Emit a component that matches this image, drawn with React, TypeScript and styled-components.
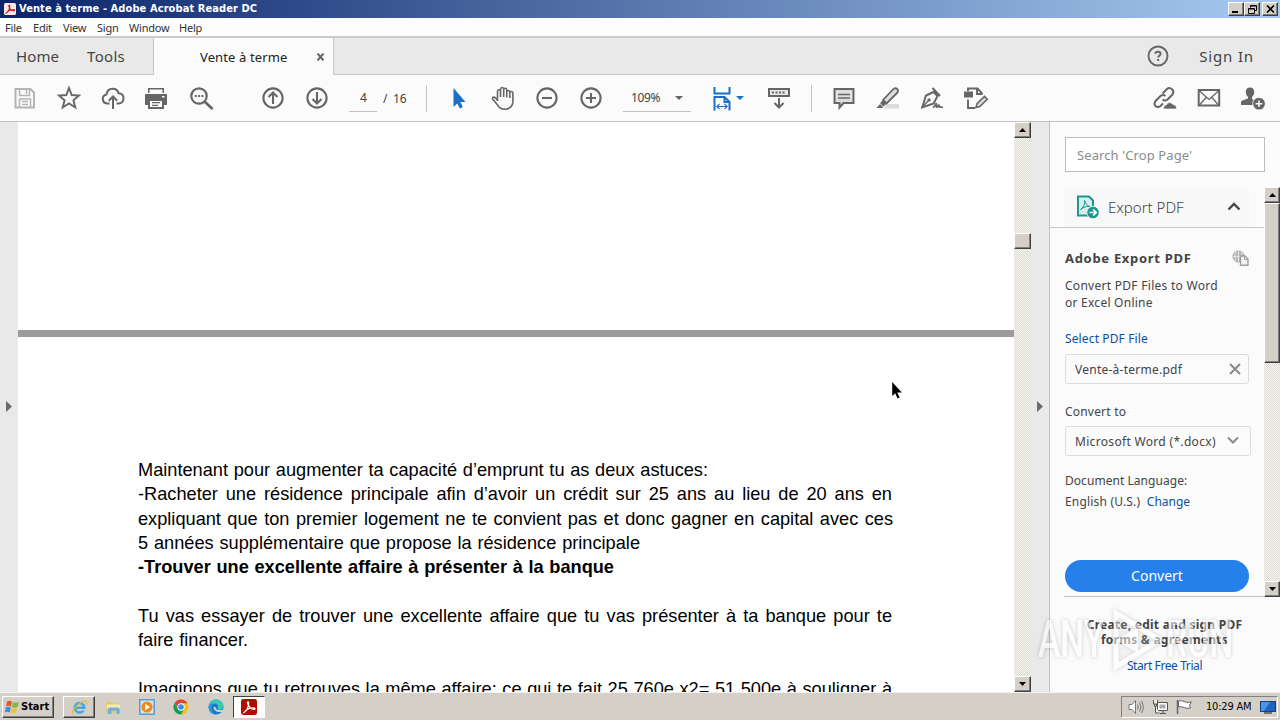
import React from "react";
import styled, { createGlobalStyle, css } from "styled-components";

const Global = createGlobalStyle`
  * { box-sizing: border-box; }
  html, body { margin: 0; padding: 0; }
  body { width: 1280px; height: 720px; overflow: hidden; font-family: "Noto Sans", sans-serif; color: #444; }
  svg { display: block; flex: none; }
`;

const Screen = styled.div`
  position: relative;
  display: flex;
  flex-direction: column;
  width: 1280px;
  height: 720px;
  overflow: hidden;
  background: #fbfbfb;
`;

type TextProps = { $size: number; $track?: number; $color?: string; $bold?: boolean; $light?: boolean };
const Text = styled.span<TextProps>`
  font-size: ${(p) => p.$size}px;
  letter-spacing: ${(p) => p.$track ?? 0}px;
  color: ${(p) => p.$color ?? "#444"};
  font-weight: ${(p) => (p.$bold ? 700 : p.$light ? 300 : 400)};
  white-space: nowrap;
`;

/* ---------- window chrome ---------- */

const TitleBar = styled.header`
  display: flex;
  align-items: center;
  height: 18px;
  flex: none;
  padding: 0 2px 0 4px;
  background: linear-gradient(90deg, #0a246a 0%, #a6caf0 100%);
`;
const TitleText = styled.span`
  flex: 1;
  margin-left: 3px;
  font: 700 11px/18px "DejaVu Sans Condensed", "DejaVu Sans", sans-serif;
  letter-spacing: 0.09px;
  color: #fff;
`;
const raised = css`
  background: #d4d0c8;
  border: 1px solid;
  border-color: #fff #404040 #404040 #fff;
  box-shadow: inset -1px -1px 0 #808080;
`;
const WindowButton = styled.button<{ $gap?: number }>`
  ${raised}
  display: flex;
  align-items: center;
  justify-content: center;
  width: 16px;
  height: 14px;
  padding: 0;
  margin-left: ${(p) => p.$gap ?? 0}px;
`;
const MenuBar = styled.nav`
  display: flex;
  height: 20px;
  flex: none;
  padding: 0 0 0 5px;
  border-bottom: 2px solid #cbcbcb;
  background: #fdfdfd;
  line-height: 20px;
`;
const MenuItem = styled.span<{ $w: number }>`
  width: ${(p) => p.$w}px;
  font-size: 11px;
  letter-spacing: -0.2px;
  color: #333;
`;
const TabBar = styled.div`
  display: flex;
  height: 37px;
  flex: none;
  background: #e9e9e9;
`;
const TabGroup = styled.div`
  display: flex;
  align-items: center;
  gap: 28px;
  width: 154px;
  padding-left: 16px;
  border-right: 1px solid #c6c6c6;
  border-bottom: 1px solid #c6c6c6;
`;
const ActiveTab = styled.div`
  display: flex;
  align-items: center;
  width: 179px;
  padding: 1px 7px 0 46px;
  background: #fbfbfb;
  justify-content: space-between;
`;
const TabSpace = styled.div`
  flex: 1;
  display: flex;
  align-items: center;
  justify-content: flex-end;
  gap: 30px;
  padding-right: 26px;
  border-left: 1px solid #c6c6c6;
  border-bottom: 1px solid #c6c6c6;
`;

/* ---------- toolbar ---------- */

const Toolbar = styled.div`
  display: flex;
  align-items: center;
  height: 47px;
  flex: none;
  padding: 0 5px 0 3px;
  border-bottom: 1px solid #c2c2c2;
  background: #fbfbfb;
`;
const ToolButton = styled.div`
  display: flex;
  align-items: center;
  justify-content: center;
  width: 44px;
  height: 46px;
`;
const Divider = styled.div`
  width: 1px;
  height: 27px;
  background: #c4c4c4;
`;
const Spacer = styled.div<{ $w?: number }>`
  ${(p) => (p.$w ? `width: ${p.$w}px; flex: none;` : "flex: 1;")}
`;
const Field = styled.div<{ $w: number; $pad?: number }>`
  display: flex;
  align-items: center;
  justify-content: space-between;
  width: ${(p) => p.$w}px;
  height: 28px;
  padding: 0 8px 0 ${(p) => p.$pad ?? 8}px;
  border-bottom: 1px solid #c0c0c0;
`;
const FitButton = styled.div`
  display: flex;
  align-items: center;
  gap: 4px;
  width: 45px;
`;

/* ---------- body ---------- */

const Body = styled.div`
  display: flex;
  flex: none;
  height: 570px;
`;
const Gutter = styled.div<{ $w: number }>`
  display: flex;
  align-items: center;
  width: ${(p) => p.$w}px;
  padding: 0 0 2px 5px;
  background: #e9e9e9;
`;
const Pages = styled.main`
  width: 996px;
  overflow: hidden;
  background: #fff;
`;
const PageGap = styled.div`
  height: 7px;
  margin-top: 208px;
  background: #9a9a9a;
`;
const PageText = styled.div`
  padding: 121px 0 0 120px;
`;
const Line = styled.div<{ $w: number; $bold?: boolean }>`
  width: ${(p) => p.$w}px;
  height: 24.3px;
  font: ${(p) => (p.$bold ? 700 : 400)} 18.2px/24.3px "Liberation Sans", Arial, sans-serif;
  color: #000;
  white-space: nowrap;
  text-align-last: justify;
`;
const Scrollbar = styled.div<{ $w: number; $h: number }>`
  display: flex;
  flex-direction: column;
  width: ${(p) => p.$w}px;
  height: ${(p) => p.$h}px;
  flex: none;
  background: repeating-conic-gradient(#dcd9d2 0 25%, #f8f7f4 0 50%) 0 0 / 2px 2px;
`;
const ScrollPiece = styled.div<{ $h: number }>`
  ${raised}
  display: flex;
  align-items: center;
  justify-content: center;
  height: ${(p) => p.$h}px;
  flex: none;
`;
const Track = styled.div<{ $h?: number }>`
  ${(p) => (p.$h ? `height: ${p.$h}px; flex: none;` : "flex: 1;")}
`;

/* ---------- side panel ---------- */

const Panel = styled.aside`
  display: flex;
  flex-direction: column;
  width: 231px;
  border-left: 1px solid #c2c2c2;
  background: #fbfbfb;
`;
const Search = styled.div`
  height: 35px;
  width: 200px;
  margin: 15px 0 15px 15px;
  padding-left: 11px;
  line-height: 33px;
  border: 1px solid #bdbdbd;
  background: #fff;
`;
const PanelScroll = styled.div`
  display: flex;
  height: 410px;
  flex: none;
`;
const PanelContent = styled.div`
  width: 214px;
`;
const SectionHead = styled.div`
  display: flex;
  align-items: center;
  height: 41px;
  padding: 0 23px 0 26px;
  border-bottom: 1px solid #c8c8c8;
  background: linear-gradient(90deg, #fbfbfb 14px, #f8f8f8 14px 199px, #fbfbfb 199px);
`;
const Section = styled.div`
  display: flex;
  flex-direction: column;
  height: 369px;
  margin-left: 14px;
  padding: 20px 15px 0 1px;
  border-bottom: 1px solid #c4c4c4;
`;
const Row = styled.div<{ $h: number; $mt?: number }>`
  display: flex;
  align-items: center;
  justify-content: space-between;
  height: ${(p) => p.$h}px;
  margin-top: ${(p) => p.$mt ?? 0}px;
  flex: none;
`;
const Box = styled(Row)<{ $w: number }>`
  width: ${(p) => p.$w}px;
  padding: 0 7px 0 9px;
  border: 1px solid #dcdcdc;
  border-radius: 3px;
`;
const ConvertButton = styled.div`
  height: 32px;
  width: 184px;
  flex: none;
  margin-top: 49px;
  border-radius: 16px;
  background: #2680eb;
  text-align: center;
  line-height: 31px;
`;
const Promo = styled.div`
  display: flex;
  flex-direction: column;
  align-items: center;
  padding: 20px 1px 0 0;
  line-height: 15px;
`;
const PromoLink = styled.div`
  margin-top: 10px;
`;
const Watermark = styled.div`
  position: absolute;
  left: 1038px;
  top: 606px;
  display: flex;
  align-items: center;
  height: 68px;
  opacity: 0.55;
  filter: drop-shadow(0 0 2px rgba(0, 0, 0, 0.35));
`;
const MarkText = styled.span<{ $w: number }>`
  width: ${(p) => p.$w}px;
  font: 500 51px/68px Roboto, sans-serif;
  color: #fff;
  transform: scaleX(0.66);
  transform-origin: 0 50%;
  white-space: nowrap;
`;
const Pointer = styled.div`
  position: absolute;
  left: 891px;
  top: 381px;
`;

/* ---------- taskbar ---------- */

const Taskbar = styled.footer`
  display: flex;
  align-items: center;
  height: 28px;
  flex: none;
  padding: 1px 2px 0 2px;
  border-top: 1px solid #f4f2ee;
  background: #d4d0c8;
`;
const StartButton = styled.div`
  ${raised}
  display: flex;
  align-items: center;
  width: 52px;
  height: 22px;
  margin-right: 9px;
  padding-left: 1px;
  font: 700 11px/20px "DejaVu Sans Condensed", "DejaVu Sans", sans-serif;
  color: #000;
`;
const TaskButton = styled.div<{ $w: number; $kind?: "up" | "down" }>`
  display: flex;
  align-items: center;
  justify-content: center;
  width: ${(p) => p.$w}px;
  height: 22px;
  ${(p) => p.$kind === "up" && raised}
  ${(p) =>
    p.$kind === "down" &&
    css`
      background: #fff;
      border: 1px solid;
      border-color: #404040 #fff #fff #404040;
    `}
`;
const Tray = styled.div`
  display: flex;
  align-items: center;
  width: 157px;
  height: 22px;
  margin-left: auto;
  padding-left: 6px;
  gap: 7px;
  border: 1px solid;
  border-color: #808080 #fff #fff #808080;
`;
const Clock = styled.span`
  width: 47px;
  margin-left: 6px;
  font: 11px/20px "DejaVu Sans Condensed", "DejaVu Sans", sans-serif;
  letter-spacing: -0.2px;
  color: #000;
  white-space: nowrap;
`;

/* ---------- icons ---------- */

const G = "#666";
const Icon = ({ s = 26, w, h, c = G, children }: { s?: number; w?: number; h?: number; c?: string; children: React.ReactNode }) => (
  <svg width={w ?? s} height={h ?? s} viewBox={`0 0 ${w ?? s} ${h ?? s}`} fill="none" stroke={c} strokeWidth={2}>
    {children}
  </svg>
);
const SaveIcon = () => (
  <Icon c="#b4b4b4">
    <path d="M3.500 4h15l3.500 3.500V22.500H3.500z" />
    <path d="M7.500 4v6.500h10V4M7.500 22v-8h11v8M14.500 5v4M10 16.500h6M10 19.500h6" strokeWidth={1.5} />
  </Icon>
);
const StarIcon = () => (
  <Icon>
    <path d="M13 3l2.700 7 7.300.5-5.600 4.800 1.900 7.200L13 18.500 6.700 22.500l1.900-7.200L3 10.500l7.300-.5z" strokeWidth={1.9} />
  </Icon>
);
const CloudIcon = () => (
  <Icon>
    <path d="M9.500 18.500H7A4.600 4.600 0 0 1 6.500 9.400C7 5.800 9.500 3.800 12.600 3.800c3.200 0 5.300 1.900 6 4.500 3.200.2 4.900 2.400 4.900 5 0 3-2 5.200-5 5.200H16.500" />
    <path d="M13 24V12M8.800 15.700L13 11.500l4.200 4.200" />
  </Icon>
);
const PrintIcon = () => (
  <Icon>
    <path d="M4 3h16v5H4zM1 9h22v11h-3v-4H4v4H1z" fill={G} stroke="none" />
    <path d="M5.500 4.500h13V8h-13z" fill="#fbfbfb" stroke="none" />
    <path d="M5 15h14v8H5z" fill="#fbfbfb" />
    <path d="M8 17.700h8M8 20.300h6" strokeWidth={1.2} />
    <path d="M18 11.700h2.500" stroke="#fff" strokeWidth={1.5} />
  </Icon>
);
const FindIcon = () => (
  <Icon>
    <circle cx="11" cy="11" r="7.700" strokeWidth={2.2} />
    <path d="M16.500 16.500l8 7.500" strokeWidth={2.7} />
    <path d="M6.800 11h2M10.100 11h2M13.400 11h2" />
  </Icon>
);
const CircleIcon = ({ d }: { d: string }) => (
  <Icon>
    <circle cx="13" cy="13" r="9.600" strokeWidth={2.1} />
    <path d={d} strokeWidth={2.1} />
  </Icon>
);
const ArrowIcon = () => (
  <Icon>
    <path d="M7.500 3v19l3.800-3.600 2.500 5.200 3-1.500-2.500-5.100h5.200z" fill="#1b6fc9" stroke="none" />
  </Icon>
);
const HandIcon = () => (
  <Icon>
    <path
      d="M7.500 16V6.500q0-1.700 1.500-1.700t1.500 1.700V12M10.500 12V4.200q0-1.700 1.600-1.700t1.600 1.700V12M13.700 12V4.700q0-1.500 1.500-1.500t1.600 1.500V12.500M16.800 8V7q0-1.500 1.500-1.500t1.600 1.500q2-1.200 3 .6V17c0 4-3.500 7.300-8 7.300-4 0-6-1.800-7.500-4.500L3 14.500c-1.500-2.500 1-3 2.500-1.500l2 2.300M19.900 7v6"
      strokeWidth={1.6}
    />
  </Icon>
);
const FitIcon = () => (
  <Icon w={20} h={27} c="#1b6fc9">
    <path d="M2.500 2v6.500h15V2M2.500 25.500V12h10l5 5v8.500M12.500 12v5h5" />
    <path d="M5 21.500h10M7.500 18.800L4.800 21.500l2.700 2.700M12.500 18.800l2.700 2.700-2.700 2.700" strokeWidth={1.2} />
  </Icon>
);
const Caret = ({ c = G, w = 8 }: { c?: string; w?: number }) => (
  <svg width={w} height={4} viewBox="0 0 8 4">
    <path d="M0 0h8L4 4z" fill={c} />
  </svg>
);
const KeyboardIcon = () => (
  <Icon>
    <path d="M3 4h20v7H3z" fill="#e6e6e6" />
    <path d="M6 7.500h2M9.500 7.500h2M13 7.500h2M16.500 7.500h2" />
    <path d="M13 13v9M8.500 18L13 22.500l4.500-4.500" />
  </Icon>
);
const CommentIcon = () => (
  <Icon>
    <path d="M3.500 4h19v14h-10L8.500 22.500V18h-5z" fill="#dedede" />
    <path d="M7 9.500h12M7 13h12" strokeWidth={1.5} />
  </Icon>
);
const HighlightIcon = () => (
  <Icon>
    <path d="M11 19h13v4.500H9z" fill="#dcdcdc" stroke="none" />
    <path d="M8 15L19 3.500q2.500-1 4 1.500.5 1.500-1 3L11.500 18.500z" fill="#dedede" strokeWidth={1.8} />
    <path d="M8 15l3.500 3.500-3 3L5 18zM5 19l3 3-.5 1H1.500z" fill={G} stroke="none" />
  </Icon>
);
const SignIcon = () => (
  <Icon>
    <path d="M13.500 3l7.500 8M14.500 7l-7.500 3.500L3.200 22.500l11.500-4L18.500 11z" strokeWidth={2} />
    <path d="M3.500 22l5.500-6" strokeWidth={1.3} />
    <circle cx="10" cy="15" r="1.700" fill={G} stroke="none" />
    <path d="M14 22.500c2-1 3-5 3.500-3.500s-1 4 .5 3 1.800-3 2-1.500-.2 2 1 1.200l3 .8" strokeWidth={1.7} />
  </Icon>
);
const EditPageIcon = () => (
  <Icon>
    <path d="M1 6.500h9v6H1z" fill={G} stroke="none" />
    <path d="M5 6V3.500h9.500l5 5.500M5 14.500V23h7M14 3.500V9h5.500" strokeWidth={1.9} />
    <path d="M13 22.500l1-3.800 7.500-7.200 2.700 2.800-7.400 7.300z" strokeWidth={1.6} fill="#ddd" />
  </Icon>
);
const LinkIcon = () => (
  <Icon>
    <path d="M10.500 8.500l4.500-4.500q2.500-2 5 .3T20.500 9.500L15.500 14.500q-2.500 2-5 0M13.500 11q-2.500-2-5 0L3.500 16q-2 2.800 0 5 2.500 2 5 0l2.500-2.500" />
    <path d="M11.500 24q-.5-3.700 3-4.200 1.500-3.300 5-1.800l1.500 1.600q4 .5 3.500 4.400z" fill={G} stroke="#fbfbfb" strokeWidth={0.7} />
  </Icon>
);
const MailIcon = () => (
  <Icon>
    <path d="M2.700 5h20.500v15.500H2.700z" />
    <path d="M3 5.500l10 9 10-9M3 20.500l7.500-8.500M23 20.500L15.500 12" strokeWidth={1.3} />
  </Icon>
);
const PersonIcon = () => (
  <Icon>
    <path d="M10 2.500c3 0 4.200 2 4.200 4.600 0 2.300-1 4-2.200 5v2.200l4.500 2v3.700H1v-2.500c0-1.500 1-2 2.500-2.500L8 13.500v-1.400c-1.200-1-2.200-2.700-2.200-5C5.800 4.500 7 2.500 10 2.500z" fill={G} stroke="none" />
    <circle cx="19" cy="18.700" r="6.300" fill={G} stroke="#fbfbfb" strokeWidth={0.8} />
    <path d="M15.700 18.700h6.600M19 15.400V22" stroke="#fbfbfb" strokeWidth={1.5} />
  </Icon>
);
const HelpIcon = () => (
  <Icon s={22}>
    <circle cx="11" cy="11" r="9.500" strokeWidth={1.9} />
    <path d="M8.300 8.700Q8.400 6.800 11 6.800q2.600 0 2.600 2.100c0 1.500-2.400 1.900-2.400 3.600M11.200 14v2" strokeWidth={1.9} />
  </Icon>
);
const TREFOIL = "M3 12.500c2.500-1 4.500-6 4.200-9 0-1.500-1.700-1-1 1 .8 2.500 3.500 5 6 5.200 1.500 0 1.300-1.400-.7-1.300-3 0-6.500 1.500-8.500 4.100z";
const AcrobatIcon = ({ size, outlined }: { size: number; outlined?: boolean }) => (
  <svg width={size} height={size} viewBox="0 0 15 15">
    <rect width="15" height="15" rx="2" fill={outlined ? "#f7e9e8" : "#b30b00"} />
    <path d={TREFOIL} fill="none" stroke={outlined ? "#c8201a" : "#fff"} strokeWidth={outlined ? 1.5 : 1.1} />
  </svg>
);
const ExportIcon = () => (
  <Icon w={24} h={24} c="#1d9590">
    <path d="M2 1.500h11l4 4V20.500H2z" fill="#d5eeee" />
    <path d="M4.500 14.500c3-1.500 4.500-5 4.200-9 .8 3.500 2.800 5.500 5.300 6-3.500-.5-6.500.5-9.500 3z" strokeWidth={1} />
    <circle cx="17" cy="17.500" r="6.200" fill="#1d9590" stroke="#fbfbfb" strokeWidth={0.8} />
    <path d="M13.500 17.500H20M17.200 14.500l3 3-3 3" stroke="#fff" strokeWidth={1.7} />
  </Icon>
);
const GlobeDocIcon = () => (
  <Icon w={17} h={16} c="#a0a0a0">
    <circle cx="6.500" cy="6.500" r="5.500" fill="#b8b8b8" strokeWidth={1} />
    <path d="M1 6.500h11M6.500 1v11M3.500 2q-2 4 0 9M9.500 2q2 4 0 9" strokeWidth={0.8} stroke="#eee" />
    <path d="M8.500 6h4.500l3 3v6.300H8.500z" fill="#f4f4f4" strokeWidth={1.4} />
    <path d="M12.500 6v3.500H16" strokeWidth={1} />
  </Icon>
);
const Triangle = ({ down }: { down?: boolean }) => (
  <svg width="7" height="4" viewBox="0 0 7 4">
    <path d={down ? "M0 0h7L3.500 4z" : "M0 4h7L3.500 0z"} fill="#000" />
  </svg>
);
const PaneArrow = () => (
  <svg width="7" height="11" viewBox="0 0 7 11">
    <path d="M1 0l6 5.500L1 11z" fill="#6a6a6a" />
  </svg>
);

const StartFlag = () => (
  <svg width="17" height="16" viewBox="0 0 17 16">
    <path d="M3 2.500q2.500-1.500 5 0L7 7.500q-2.500-1.500-5 0z" fill="#e8562a" />
    <path d="M9 3q2.500 1.500 6 0l-1.500 5q-3 1.500-5.500 0z" fill="#7eb83a" />
    <path d="M1.800 8.500q2.500-1.500 5 0l-1 5q-2.500-1.500-5 0z" fill="#3f8ed8" />
    <path d="M7.700 9q2.500 1.500 5.500 0l-1.200 4.500q-3 1.500-5.300 0z" fill="#f6c22c" />
  </svg>
);
const IeIcon = () => (
  <svg width="17" height="17" viewBox="0 0 17 17" fill="none">
    <path d="M12.500 11.500A4.800 4.800 0 1 1 13.300 8.700H5" stroke="#4ba7dd" strokeWidth="2.600" />
    <path d="M1.500 15.500C0 13 5 6 11 3c4-2 5.500-1 4.500 2" stroke="#e7bb3c" strokeWidth="1.200" />
  </svg>
);
const FolderIcon = () => (
  <svg width="17" height="15" viewBox="0 0 17 15">
    <path d="M1 2h5l1 1.500h8V13H1z" fill="#e6c768" />
    <path d="M2 4.500h13V9H2z" fill="#f9eab4" />
    <path d="M3 14V9q0-1.500 1.500-1.500h8.500q1.500 0 1.500 1.500v5h-3v-3.500h-5V14z" fill="#6db0dc" />
  </svg>
);
const PlayerIcon = () => (
  <svg width="16" height="16" viewBox="0 0 16 16">
    <rect x=".75" y=".75" width="14.500" height="14.500" fill="#cfe5f5" stroke="#5d9bcd" strokeWidth="1.500" />
    <circle cx="8" cy="8" r="5.600" fill="#f08a1d" />
    <path d="M6.200 4.800L11 8l-4.800 3.200z" fill="#fff" />
  </svg>
);
const ChromeIcon = () => (
  <svg width="16" height="16" viewBox="0 0 16 16">
    <circle cx="8" cy="8" r="7.500" fill="#f4c20d" />
    <path d="M1.500 4.250A7.500 7.500 0 0 1 14.500 4.250H8L4.750 9.900z" fill="#db4437" />
    <path d="M1.500 4.250A7.500 7.500 0 0 0 8 15.500L11.250 9.870 8 11.500 4.750 9.870z" fill="#0f9d58" />
    <circle cx="8" cy="8" r="3.700" fill="#fff" />
    <circle cx="8" cy="8" r="2.800" fill="#4285f4" />
  </svg>
);
const EdgeIcon = () => (
  <svg width="16" height="16" viewBox="0 0 16 16">
    <circle cx="8" cy="8" r="7.500" fill="#1a78c8" />
    <path d="M.7 7C1.200 3 4.300.5 8 .5c4.300 0 7.500 3 7.500 6.500 0 2.200-1.700 3.700-4 3.700-1.700 0-2.300-.7-1.800-1.500C11 6.500 8.500 4.500 5.800 4.500 3.500 4.500 1.500 5.500.7 7z" fill="#3cc8b0" />
    <path d="M6.500 8c0 3.500 3.500 5 9.500 3.500" stroke="#d4d0c8" strokeWidth="2" fill="none" />
    <path d="M.7 7C1.500 5.500 3.500 4.500 5.800 4.500 4 5.500 3 8 3.500 10.500 4 13 6 15 8 15.500 3.500 15.500 0 12 .7 7z" fill="#2a9be0" />
  </svg>
);
const SpeakerIcon = () => (
  <svg width="17" height="16" viewBox="0 0 17 16" fill="none" stroke="#777" strokeWidth="1">
    <path d="M1 5.500h3l3.500-4v13L4 10.500H1z" fill="#fff" />
    <path d="M9.500 5.500q1.500 2.500 0 5M11.500 3.500q3 4.500 0 9M13.500 2q3.500 6 0 12" />
  </svg>
);
const NetworkIcon = () => (
  <svg width="17" height="16" viewBox="0 0 17 16" fill="none" stroke="#555" strokeWidth="1">
    <path d="M5.500 3.500h10v8h-10z" fill="#fff" />
    <path d="M7.500 5.500h6v4h-6z" fill="#aaa" stroke="none" />
    <path d="M8 14.500h6M11 12v2M1.500 1v4h4V1M2.500 5v2h2V5M3.500 7v7h4" fill="#eee" />
  </svg>
);
const FlagIcon = () => (
  <svg width="17" height="16" viewBox="0 0 17 16" fill="#fff" stroke="#666" strokeWidth="1">
    <path d="M2.500 2q3-1 5.500.5t7.500.5l-2 3 1 3q-4 1-6.500-.5T2.500 8z" />
    <path d="M1.500 1v14" strokeWidth="1.500" />
  </svg>
);
const MonitorIcon = () => (
  <svg width="16" height="13" viewBox="0 0 16 13">
    <rect x=".5" y=".5" width="15" height="10" fill="#1f63c4" stroke="#17407e" />
    <path d="M1 1h9L4 10H1z" fill="#4d92e6" />
    <path d="M4 12h8" stroke="#555" strokeWidth="1.500" />
  </svg>
);

const tools = [SaveIcon, StarIcon, CloudIcon, PrintIcon, FindIcon];
const annotate = [CommentIcon, HighlightIcon, SignIcon, EditPageIcon];
const share = [LinkIcon, MailIcon, PersonIcon];
const menus: [string, number][] = [["File", 28], ["Edit", 30], ["View", 34], ["Sign", 32], ["Window", 50], ["Help", 30]];
const lines: { t: string; w: number; b?: boolean }[] = [
  { t: "Maintenant pour augmenter ta capacité d’emprunt tu as deux astuces:", w: 570 },
  { t: "-Racheter une résidence principale afin d’avoir un crédit sur 25 ans au lieu de 20 ans en", w: 754 },
  { t: "expliquant que ton premier logement ne te convient pas et donc gagner en capital avec ces", w: 755 },
  { t: "5 années supplémentaire que propose la résidence principale", w: 502 },
  { t: "-Trouver une excellente affaire à présenter à la banque", w: 476, b: true },
  { t: "", w: 10 },
  { t: "Tu vas essayer de trouver une excellente affaire que tu vas présenter à ta banque pour te", w: 754 },
  { t: "faire financer.", w: 110 },
  { t: "", w: 10 },
  { t: "Imaginons que tu retrouves la même affaire: ce qui te fait 25 760e x2= 51 500e à souligner à", w: 754 },
];

export default function App() {
  return (
    <Screen>
      <Global />
      <TitleBar>
        <AcrobatIcon size={12} outlined />
        <TitleText>Vente à terme - Adobe Acrobat Reader DC</TitleText>
        <WindowButton>
          <svg width="8" height="8"><path d="M0 7h6" stroke="#000" strokeWidth="2" /></svg>
        </WindowButton>
        <WindowButton>
          <svg width="9" height="9" fill="none" stroke="#000">
            <path d="M2.500 2.500V.5h6v5h-2M2.500 1h6M.5 3.500h6v5h-6zM.5 4h6" />
          </svg>
        </WindowButton>
        <WindowButton $gap={2}>
          <svg width="9" height="8"><path d="M1 .5l7 7M8 .5l-7 7" stroke="#000" strokeWidth="1.600" /></svg>
        </WindowButton>
      </TitleBar>
      <MenuBar>
        {menus.map(([t, w]) => <MenuItem key={t} $w={w}>{t}</MenuItem>)}
      </MenuBar>
      <TabBar>
        <TabGroup>
          <Text $size={15} $track={0.1}>Home</Text>
          <Text $size={15} $track={0.3}>Tools</Text>
        </TabGroup>
        <ActiveTab>
          <Text $size={13} $track={0.12} $color="#222">Vente à terme</Text>
          <svg width="10" height="8"><path d="M1.500 .5l6 7M7.500 .5l-6 7" stroke="#666" strokeWidth="2" /></svg>
        </ActiveTab>
        <TabSpace>
          <HelpIcon />
          <Text $size={15} $track={0.85}>Sign In</Text>
        </TabSpace>
      </TabBar>
      <Toolbar>
        {tools.map((I, i) => <ToolButton key={i}><I /></ToolButton>)}
        <Spacer $w={28} />
        <ToolButton><CircleIcon d="M13 19V8M8.500 12L13 7.500l4.500 4.500" /></ToolButton>
        <ToolButton><CircleIcon d="M13 7v11M8.500 14l4.500 4.500 4.500-4.500" /></ToolButton>
        <Spacer $w={10} />
        <Field $w={28} $pad={11}><Text $size={12}>4</Text></Field>
        <Spacer $w={6} />
        <Text $size={12} $track={-0.2}>/&nbsp; 16</Text>
        <Spacer />
        <Divider />
        <Spacer $w={10} />
        <ToolButton><ArrowIcon /></ToolButton>
        <ToolButton><HandIcon /></ToolButton>
        <ToolButton><CircleIcon d="M8 13h10" /></ToolButton>
        <ToolButton><CircleIcon d="M8 13h10M13 8v10" /></ToolButton>
        <Spacer $w={10} />
        <Field $w={68}><Text $size={12} $track={-0.4}>109%</Text><Caret /></Field>
        <Spacer $w={21} />
        <FitButton><FitIcon /><Caret c="#1b6fc9" /></FitButton>
        <ToolButton><KeyboardIcon /></ToolButton>
        <Spacer $w={10} />
        <Divider />
        <Spacer $w={10} />
        {annotate.map((I, i) => <ToolButton key={i}><I /></ToolButton>)}
        <Spacer $w={145} />
        {share.map((I, i) => <ToolButton key={i}><I /></ToolButton>)}
      </Toolbar>
      <Body>
        <Gutter $w={18}><PaneArrow /></Gutter>
        <Pages>
          <PageGap />
          <PageText>
            {lines.map((l, i) => <Line key={i} $w={l.w} $bold={l.b}>{l.t}</Line>)}
          </PageText>
        </Pages>
        <Scrollbar $w={17} $h={570}>
          <ScrollPiece $h={16}><Triangle /></ScrollPiece>
          <Track $h={95} />
          <ScrollPiece $h={16} />
          <Track />
          <ScrollPiece $h={16}><Triangle down /></ScrollPiece>
        </Scrollbar>
        <Gutter $w={18}><PaneArrow /></Gutter>
        <Panel>
          <Search><Text $size={13} $color="#8c8c8c" $track={0.1}>Search 'Crop Page'</Text></Search>
          <PanelScroll>
            <PanelContent>
              <SectionHead>
                <ExportIcon />
                <Spacer $w={8} />
                <Text $size={15} $light>Export PDF</Text>
                <Spacer />
                <svg width="14" height="11" fill="none"><path d="M1.500 7.500L7 2l5.500 5.500" stroke="#444" strokeWidth="2.400" /></svg>
              </SectionHead>
              <Section>
                <Row $h={20}>
                  <Text $size={13} $bold $track={0.7}>Adobe Export PDF</Text>
                  <GlobeDocIcon />
                </Row>
                <Row $h={17} $mt={9}><Text $size={12} $track={0.28}>Convert PDF Files to Word</Text></Row>
                <Row $h={17}><Text $size={12} $track={0.25}>or Excel Online</Text></Row>
                <Row $h={18} $mt={18}><Text $size={12} $track={0.13} $color="#0d4f9e">Select PDF File</Text></Row>
                <Box $h={30} $mt={7} $w={184}>
                  <Text $size={12} $track={0.25}>Vente-à-terme.pdf</Text>
                  <svg width="12" height="12"><path d="M1 1l10 10M11 1L1 11" stroke="#8a8a8a" strokeWidth="2" /></svg>
                </Box>
                <Row $h={18} $mt={18}><Text $size={12} $track={0.2}>Convert to</Text></Row>
                <Box $h={30} $mt={6} $w={186}>
                  <Text $size={12} $track={0.32}>Microsoft Word (*.docx)</Text>
                  <Spacer />
                  <svg width="16" height="10" fill="none"><path d="M1 1.500l5 5 5-5" stroke="#8a8a8a" strokeWidth="2" /></svg>
                </Box>
                <Row $h={20} $mt={14}><Text $size={12} $track={0.05}>Document Language:</Text></Row>
                <Row $h={20} $mt={1}>
                  <Text $size={12} $track={0.18}>English (U.S.)&nbsp; <Text $size={12} $color="#0d4f9e">Change</Text></Text>
                </Row>
                <ConvertButton><Text $size={14} $color="#fff" $track={0}>Convert</Text></ConvertButton>
              </Section>
            </PanelContent>
            <Scrollbar $w={16} $h={410}>
              <ScrollPiece $h={16}><Triangle /></ScrollPiece>
              <ScrollPiece $h={160} />
              <Track />
              <ScrollPiece $h={16}><Triangle down /></ScrollPiece>
            </Scrollbar>
          </PanelScroll>
          <Promo>
            <Text $size={12} $bold $track={0.25}>Create, edit and sign PDF</Text>
            <Text $size={12} $bold $track={0.25}>forms &amp; agreements</Text>
            <PromoLink><Text $size={12} $color="#0d4f9e" $track={-0.4}>Start Free Trial</Text></PromoLink>
          </Promo>
        </Panel>
      </Body>
      <Taskbar>
        <StartButton><StartFlag />Start</StartButton>
        <TaskButton $w={32} $kind="up"><IeIcon /></TaskButton>
        <TaskButton $w={36}><FolderIcon /></TaskButton>
        <TaskButton $w={32}><PlayerIcon /></TaskButton>
        <TaskButton $w={36}><ChromeIcon /></TaskButton>
        <TaskButton $w={34}><EdgeIcon /></TaskButton>
        <TaskButton $w={32} $kind="down"><AcrobatIcon size={16} /></TaskButton>
        <Tray>
          <SpeakerIcon />
          <NetworkIcon />
          <FlagIcon />
          <Clock>10:29 AM</Clock>
          <MonitorIcon />
        </Tray>
      </Taskbar>
      <Pointer>
        <svg width="12" height="20" viewBox="0 0 12 20">
          <path d="M1.200 1v14l3-2.800 2.400 5.300 2-.9-2.400-5.200h4.600z" fill="#000" />
        </svg>
      </Pointer>
      <Watermark>
        <MarkText $w={74}>ANY</MarkText>
        <svg width="54" height="64" viewBox="0 0 54 64">
          <path d="M4 5l44 27L4 59z" fill="rgba(255,255,255,.3)" stroke="#fff" strokeWidth="5" />
          <path d="M4 32l22-13v26z" fill="#fff" />
        </svg>
        <MarkText $w={70}>RUN</MarkText>
      </Watermark>
    </Screen>
  );
}
